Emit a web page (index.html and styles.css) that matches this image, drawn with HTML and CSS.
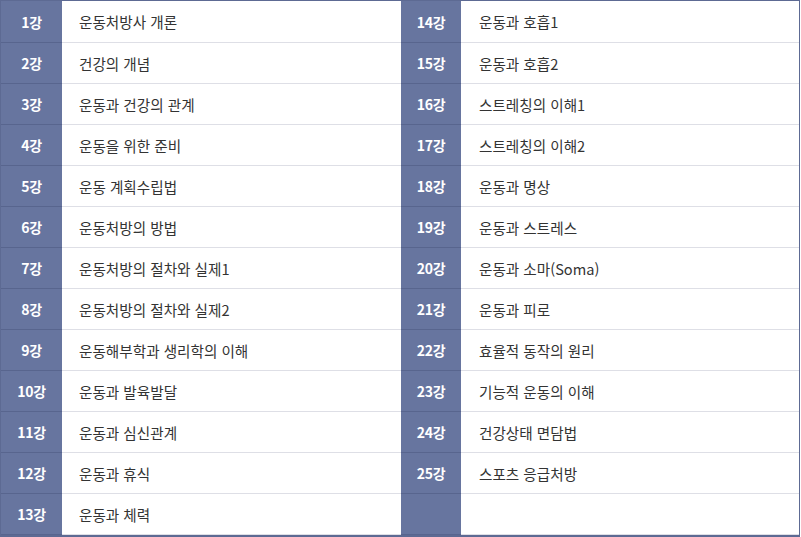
FILE: index.html
```html
<!DOCTYPE html>
<html lang="ko">
<head>
<meta charset="utf-8">
<link rel="stylesheet" href="styles.css">
</head>
<body>
<table class="curriculum">
<colgroup><col class="c-num1"><col class="c-txt1"><col class="c-num2"><col class="c-txt2"></colgroup>
<tbody>
<tr><th>1강</th><td>운동처방사 개론</td><th>14강</th><td>운동과 호흡1</td></tr>
<tr><th>2강</th><td>건강의 개념</td><th>15강</th><td>운동과 호흡2</td></tr>
<tr><th>3강</th><td>운동과 건강의 관계</td><th>16강</th><td>스트레칭의 이해1</td></tr>
<tr><th>4강</th><td>운동을 위한 준비</td><th>17강</th><td>스트레칭의 이해2</td></tr>
<tr><th>5강</th><td>운동 계획수립법</td><th>18강</th><td>운동과 명상</td></tr>
<tr><th>6강</th><td>운동처방의 방법</td><th>19강</th><td>운동과 스트레스</td></tr>
<tr><th>7강</th><td>운동처방의 절차와 실제1</td><th>20강</th><td>운동과 소마(Soma)</td></tr>
<tr><th>8강</th><td>운동처방의 절차와 실제2</td><th>21강</th><td>운동과 피로</td></tr>
<tr><th>9강</th><td>운동해부학과 생리학의 이해</td><th>22강</th><td>효율적 동작의 원리</td></tr>
<tr><th>10강</th><td>운동과 발육발달</td><th>23강</th><td>기능적 운동의 이해</td></tr>
<tr><th>11강</th><td>운동과 심신관계</td><th>24강</th><td>건강상태 면담법</td></tr>
<tr><th>12강</th><td>운동과 휴식</td><th>25강</th><td>스포츠 응급처방</td></tr>
<tr><th>13강</th><td>운동과 체력</td><th></th><td></td></tr>
</tbody>
</table>
</body>
</html>
```

FILE: styles.css
```css
html, body {
  margin: 0;
  padding: 0;
  background: #ffffff;
}
.curriculum {
  border-collapse: separate;
  border-spacing: 0;
  width: 800px;
  table-layout: fixed;
  border-top: 1px solid #5d6a93;
  border-left: 1px solid #5d6a93;
  border-right: 1px solid #5d6a93;
  border-bottom: 2px solid #5d6a93;
  font-family: "Noto Sans CJK KR", "Noto Sans", sans-serif;
  font-size: 14.6px;
}
.c-num1 { width: 61px; }
.c-txt1 { width: 339px; }
.c-num2 { width: 60px; }
.c-txt2 { width: 338px; }
.curriculum th,
.curriculum td {
  height: 41px;
  padding: 0;
  box-sizing: border-box;
  vertical-align: middle;
}
.curriculum th {
  background: #67759f;
  color: #ffffff;
  font-weight: bold;
  font-size: 14px;
  text-align: center;
  border-bottom: 1px solid #58658e;
  letter-spacing: -0.3px;
}
.curriculum td {
  color: #333333;
  text-align: left;
  padding-left: 17px;
  border-bottom: 1px solid #dedfe6;
}
.curriculum tr:first-child th,
.curriculum tr:first-child td {
  height: 42px;
}
.curriculum td:last-child {
  padding-left: 18px;
}
```
